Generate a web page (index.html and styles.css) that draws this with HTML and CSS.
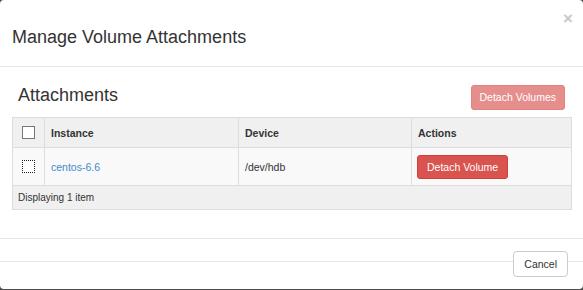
FILE: index.html
```html
<!DOCTYPE html>
<html lang="en">
<head>
    <meta charset="UTF-8">
    <meta name="viewport" content="width=device-width, initial-scale=1.0">
    <title>Manage Volume Attachments</title>
    <link rel="stylesheet" href="styles.css">
</head>
<body>
    <div class="modal">
        <div class="modal-header">
            <h2 class="modal-title">Manage Volume Attachments</h2>
            <button class="close" type="button">&times;</button>
        </div>

        <div class="modal-body">
            <div class="table-heading">
                <h3>Attachments</h3>
                <button class="btn btn-danger" disabled>Detach Volumes</button>
            </div>
            <table class="data-table">
                <thead>
                    <tr>
                        <th class="col-check"><span class="checkbox"></span></th>
                        <th class="col-instance">Instance</th>
                        <th class="col-device">Device</th>
                        <th>Actions</th>
                    </tr>
                </thead>
                <tbody>
                    <tr>
                        <td class="col-check"><span class="checkbox focused"></span></td>
                        <td><a href="#">centos-6.6</a></td>
                        <td>/dev/hdb</td>
                        <td class="col-actions"><button class="btn btn-danger">Detach Volume</button></td>
                    </tr>
                </tbody>
                <tfoot>
                    <tr>
                        <td colspan="4">Displaying 1 item</td>
                    </tr>
                </tfoot>
            </table>
        </div>

        <div class="modal-footer">
            <button class="btn btn-default">Cancel</button>
        </div>
    </div>
</body>
</html>
```

FILE: styles.css
```css
body {
    margin: 0;
    background-color: #4d4d4d;
    font-family: "Liberation Sans", Arial, sans-serif;
    color: #333;
}

.modal {
    width: 583px;
    background-color: #fff;
    border-radius: 4px;
}

.modal-header {
    display: flex;
    justify-content: space-between;
    align-items: flex-start;
    padding: 10px 10px 16px 12px;
    border-bottom: 1px solid #e5e5e5;
}

.modal-title {
    margin: 14px 0 0;
    font-size: 18px;
    font-weight: normal;
    line-height: 26px;
}

.close {
    padding: 0;
    border: 0;
    background: none;
    font-family: inherit;
    font-size: 17px;
    font-weight: bold;
    line-height: 17px;
    color: #c8c8c8;
}

.modal-body {
    padding: 16px 11px 28px 12px;
}

.table-heading {
    display: flex;
    justify-content: space-between;
    align-items: flex-start;
    padding: 0 7px 0 6px;
    margin-bottom: 7px;
}

.table-heading h3 {
    margin: 0;
    font-size: 18px;
    font-weight: normal;
    line-height: 25px;
}

.table-heading .btn {
    margin-top: 2px;
    padding: 0 8px;
    line-height: 23px;
}

.btn {
    font-family: inherit;
    font-size: 10.5px;
    border: 1px solid transparent;
    border-radius: 3px;
    padding: 0 9px;
    line-height: 22px;
}

.btn-danger {
    background-color: #d9534f;
    border-color: #d43f3a;
    color: #fff;
}

.btn-danger:disabled {
    opacity: 0.65;
}

.btn-default {
    background-color: #fff;
    border-color: #ccc;
    border-radius: 4px;
    color: #333;
    padding: 0 10px;
    line-height: 24px;
}

.data-table {
    width: 100%;
    border-collapse: collapse;
    border: 1px solid #ddd;
    font-size: 10.5px;
}

.data-table th,
.data-table td {
    border: 1px solid #ddd;
    padding: 0 6px;
    text-align: left;
    vertical-align: middle;
}

.data-table th {
    height: 29px;
    background-color: #f0f0f0;
    font-weight: bold;
}

.data-table tbody td {
    height: 37px;
    background-color: #f9f9f9;
}

.data-table tfoot td {
    height: 23px;
    padding-left: 5px;
    background-color: #f0f0f0;
    font-size: 10px;
}

.data-table .col-check {
    width: 19px;
    text-align: center;
    padding: 0 6px;
}

.data-table .col-instance { width: 181px; }
.data-table .col-device { width: 160px; }
.data-table .col-actions { padding-left: 5px; }

.data-table a {
    color: #428bca;
    text-decoration: none;
}

.checkbox {
    display: inline-block;
    width: 11px;
    height: 11px;
    border: 1px solid #777;
    background-color: #fff;
    vertical-align: middle;
}

.checkbox.focused {
    border: 1px dotted #222;
}

.modal-footer {
    padding: 12px 15px;
    border-top: 1px solid #e5e5e5;
    text-align: right;
    background: linear-gradient(#e5e5e5, #e5e5e5) no-repeat 0 22px / 100% 1px;
}
```
